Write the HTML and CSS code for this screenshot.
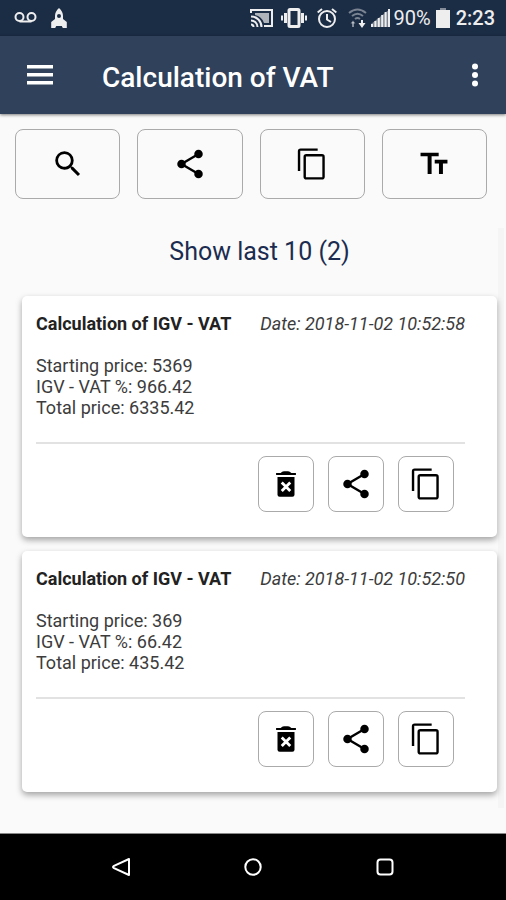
FILE: index.html
```html
<!DOCTYPE html>
<html lang="en">
<head>
    <meta charset="UTF-8">
    <meta name="viewport" content="width=device-width, initial-scale=1.0">
    <title>Calculation of VAT</title>
    <link rel="stylesheet" href="styles.css">
</head>
<body>
    <!-- Shared icons -->
    <svg class="sprite" aria-hidden="true">
        <symbol id="icon-search" viewBox="0 0 24 24">
            <path d="M15.5 14h-.79l-.28-.27A6.47 6.47 0 0 0 16 9.5 6.5 6.5 0 1 0 9.5 16c1.61 0 3.09-.59 4.23-1.57l.27.28v.79l5 4.99L20.49 19l-4.99-5zm-6 0C7.01 14 5 11.99 5 9.5S7.01 5 9.5 5 14 7.01 14 9.5 11.99 14 9.5 14z"/>
        </symbol>
        <symbol id="icon-share" viewBox="0 0 24 24">
            <path d="M18 5 6 12l12 7" fill="none" stroke="currentColor" stroke-width="1.7"/>
            <circle cx="18" cy="5" r="3"/>
            <circle cx="6" cy="12" r="3"/>
            <circle cx="18" cy="19" r="3"/>
        </symbol>
        <symbol id="icon-copy" viewBox="0 0 24 24">
            <path d="M16 1H4a2 2 0 0 0-2 2v14h1.7V2.7H16V1zm3 4H8a2 2 0 0 0-2 2v14a2 2 0 0 0 2 2h11a2 2 0 0 0 2-2V7a2 2 0 0 0-2-2zm.3 16.3H7.7V6.7h11.6v14.6z"/>
        </symbol>
        <symbol id="icon-text" viewBox="0 0 24 24">
            <path d="M2.500 4v2.600h5V19h2.800V6.600h5V4H2.500zm19 5h-9v2.600h3V19h2.800v-7.400h3.200V9z"/>
        </symbol>
        <symbol id="icon-trash" viewBox="0 0 24 24">
            <path d="M5 5.600V4.200h3.200C9 3.300 10.200 3 12 3s3 .3 3.800 1.200H19v1.400zM6 7h12v12.500A1.500 1.500 0 0 1 16.500 21h-9A1.500 1.500 0 0 1 6 19.500z"/>
            <path d="m9 11 6 6m0-6-6 6" fill="none" stroke="#fff" stroke-width="2"/>
        </symbol>
    </svg>

    <div class="status-bar">
        <div class="status-left">
            <svg width="23" height="20" viewBox="0 0 23 20" fill="none" stroke="currentColor" stroke-width="2">
                <circle cx="5.500" cy="9" r="4"/>
                <circle cx="17.500" cy="9" r="4"/>
                <path d="M5.500 13.500h12"/>
            </svg>
            <svg width="16" height="20" viewBox="0 0 16 20" fill="currentColor">
                <path fill-rule="evenodd" d="M8 0c2.600 2.400 4 5 4 8v3l3.800 3V20h-4l-1-2H5.200l-1 2h-4v-6L4 11V8c0-3 1.400-5.600 4-8zm0 6a2 2 0 1 0 0 4 2 2 0 0 0 0-4z"/>
            </svg>
        </div>
        <div class="status-right">
            <svg width="23" height="20" viewBox="0 0 23 20" fill="none" stroke="currentColor" stroke-width="2">
                <path d="M1 5V2h21v16h-8M1 16.500a2.500 2.500 0 0 1 2.500 2.500M1 12.500A6.500 6.500 0 0 1 7.500 19M1 8.500A10.500 10.500 0 0 1 11.500 19"/>
                <path d="M5 5h14v10h-5C12.500 10.500 9.500 8 5 7z" fill="currentColor" stroke="none" opacity=".7"/>
            </svg>
            <svg class="icon-vibrate" width="26" height="20" viewBox="0 0 26 20" fill="none" stroke="currentColor">
                <rect x="8" y="1.500" width="10" height="17" rx="1" stroke-width="3"/>
                <path d="M4.500 5v10M21.500 5v10" stroke-width="3"/>
                <path d="M1 7.500v5M25 7.500v5" stroke-width="2"/>
            </svg>
            <svg width="20" height="20" viewBox="0 0 20 20" fill="none" stroke="currentColor" stroke-width="2">
                <circle cx="10" cy="11" r="8"/>
                <path d="M10 6v5.500l4 2.500M.7 4.500 5 1M19.300 4.500 15 1"/>
            </svg>
            <svg class="icon-wifi" width="19" height="20" viewBox="0 0 19 20" fill="none" stroke="currentColor">
                <path d="M1 5q8.500-7 17 0M4 8q5.500-4.500 11 0M7 11q2.500-2 5 0" stroke-width="2" opacity=".45"/>
                <path d="M5 19v-5" stroke-width="2" opacity=".5"/>
                <path d="m2.500 15.500 2.500-3 2.500 3z" fill="currentColor" stroke="none" opacity=".5"/>
                <path d="M14 12v4" stroke-width="2"/>
                <path d="m10.500 15 3.500 5 3.500-5z" fill="currentColor" stroke="none"/>
            </svg>
            <svg class="icon-signal" width="19" height="20" viewBox="0 0 19 20" fill="currentColor">
                <path d="M0 16h2v3H0zM3.400 13h2v6h-2zM6.800 10h2v9h-2zM10.200 7h2v12h-2zM13.600 4h2v15h-2zM17 1h2v18h-2z"/>
                <path d="M0 16 19 1v18H0z" opacity=".45"/>
            </svg>
            <span class="battery-level">90%</span>
            <svg class="icon-battery" width="14" height="20" viewBox="0 0 14 20" fill="currentColor">
                <path d="M4 0h6v2H4z" opacity=".5"/>
                <path d="M0 2h14v18H0z"/>
            </svg>
            <span class="clock">2:23</span>
        </div>
    </div>

    <header class="app-bar">
        <button class="bar-btn" aria-label="Menu">
            <svg width="26" height="22" viewBox="0 0 26 22" fill="currentColor">
                <path d="M0 1h26v3.500H0zM0 9h26v3.500H0zM0 17h26v3.500H0z"/>
            </svg>
        </button>
        <h1>Calculation of VAT</h1>
        <button class="bar-btn" aria-label="More options">
            <svg width="8" height="24" viewBox="0 0 8 24" fill="currentColor">
                <circle cx="4" cy="3.500" r="3"/>
                <circle cx="4" cy="12" r="3"/>
                <circle cx="4" cy="20.500" r="3"/>
            </svg>
        </button>
    </header>

    <main>
        <div class="toolbar">
            <button class="icon-btn" aria-label="Search"><svg class="icon"><use href="#icon-search"/></svg></button>
            <button class="icon-btn" aria-label="Share all"><svg class="icon"><use href="#icon-share"/></svg></button>
            <button class="icon-btn" aria-label="Copy all"><svg class="icon"><use href="#icon-copy"/></svg></button>
            <button class="icon-btn" aria-label="Text size"><svg class="icon"><use href="#icon-text"/></svg></button>
        </div>

        <section class="history">
            <h2>Show last 10 (2)</h2>

            <article class="card">
                <div class="card-header">
                    <h3>Calculation of IGV - VAT</h3>
                    <time datetime="2018-11-02T10:52:58">Date: 2018-11-02 10:52:58</time>
                </div>
                <p>Starting price: 5369</p>
                <p>IGV - VAT %: 966.42</p>
                <p>Total price: 6335.42</p>
                <div class="card-actions">
                    <button class="icon-btn" aria-label="Delete"><svg class="icon"><use href="#icon-trash"/></svg></button>
                    <button class="icon-btn" aria-label="Share"><svg class="icon"><use href="#icon-share"/></svg></button>
                    <button class="icon-btn" aria-label="Copy"><svg class="icon"><use href="#icon-copy"/></svg></button>
                </div>
            </article>

            <article class="card">
                <div class="card-header">
                    <h3>Calculation of IGV - VAT</h3>
                    <time datetime="2018-11-02T10:52:50">Date: 2018-11-02 10:52:50</time>
                </div>
                <p>Starting price: 369</p>
                <p>IGV - VAT %: 66.42</p>
                <p>Total price: 435.42</p>
                <div class="card-actions">
                    <button class="icon-btn" aria-label="Delete"><svg class="icon"><use href="#icon-trash"/></svg></button>
                    <button class="icon-btn" aria-label="Share"><svg class="icon"><use href="#icon-share"/></svg></button>
                    <button class="icon-btn" aria-label="Copy"><svg class="icon"><use href="#icon-copy"/></svg></button>
                </div>
            </article>
        </section>
    </main>

    <nav class="nav-bar">
        <button class="bar-btn" aria-label="Back">
            <svg width="20" height="20" viewBox="0 0 20 20" fill="none" stroke="currentColor" stroke-width="2" stroke-linejoin="round">
                <path d="M18 2v16L3 11.200q-2-1.200 0-2.400z"/>
            </svg>
        </button>
        <button class="bar-btn" aria-label="Home">
            <svg width="20" height="20" viewBox="0 0 20 20" fill="none" stroke="currentColor" stroke-width="2">
                <circle cx="10" cy="10" r="7.700"/>
            </svg>
        </button>
        <button class="bar-btn" aria-label="Recent apps">
            <svg width="20" height="20" viewBox="0 0 20 20" fill="none" stroke="currentColor" stroke-width="2">
                <rect x="2.500" y="2.500" width="15" height="15" rx="3"/>
            </svg>
        </button>
    </nav>
</body>
</html>
```
FILE: styles.css
```css
* {
    box-sizing: border-box;
}
body {
    margin: 0;
    min-height: 100vh;
    display: flex;
    flex-direction: column;
    font-family: Roboto, "Liberation Sans", sans-serif;
    background: #fafafa;
    color: #3c3c3c;
}
h1, h2, h3, p {
    margin: 0;
}
svg {
    display: block;
    flex: none;
}
button {
    padding: 0;
    cursor: pointer;
}
.sprite {
    position: absolute;
    width: 0;
    height: 0;
}

/* Status bar */
.status-bar {
    display: flex;
    justify-content: space-between;
    align-items: center;
    height: 36px;
    padding: 0 11px 0 14px;
    background: #1b2c45;
    color: #eee;
}
.status-left,
.status-right {
    display: flex;
    align-items: center;
}
.status-left {
    gap: 14px;
}
.icon-vibrate {
    margin: 0 10px 0 8px;
}
.icon-wifi {
    margin-left: 11px;
}
.icon-signal {
    margin: 0 3px 0 4px;
}
.battery-level {
    font-size: 20px;
}
.icon-battery {
    margin: 0 6px 0 5px;
}
.clock {
    font-size: 20px;
    font-weight: 500;
}

/* App bar */
.app-bar {
    position: relative;
    display: flex;
    align-items: center;
    height: 78px;
    padding: 0 27px;
    background: #2f415b;
    color: #fff;
    box-shadow: 0 1px 3px rgba(0, 0, 0, 0.5);
}
.app-bar h1 {
    flex: 1;
    margin-left: 49px;
    padding-top: 4px;
    font-size: 28px;
    font-weight: 500;
}
.bar-btn {
    border: none;
    background: none;
    color: inherit;
}

/* Content */
main {
    flex: 1;
}
.toolbar {
    display: grid;
    grid-template-columns: repeat(4, 1fr);
    gap: 17px;
    padding: 15px 19px 29px 15px;
}
.icon-btn {
    display: flex;
    justify-content: center;
    align-items: center;
    height: 70px;
    border: 1px solid #aaa;
    border-radius: 8px;
    background: transparent;
    color: #000;
}
.icon {
    width: 34px;
    height: 34px;
    fill: currentColor;
}
.history {
    margin-right: 2px;
    padding: 0 1px 16px 22px;
    border-right: 6px solid #f5f5f5;
}
.history h2 {
    padding: 8px 0 28px;
    font-size: 25px;
    line-height: 32px;
    font-weight: 400;
    text-align: center;
    color: #1b2c50;
}
.card {
    padding: 17px 32px 25px 14px;
    border-radius: 5px;
    background: #fff;
    box-shadow: 0 3px 6px rgba(0, 0, 0, 0.35);
    font-size: 18px;
    line-height: 21px;
}
.card + .card {
    margin-top: 14px;
}
.card-header {
    display: flex;
    justify-content: space-between;
    margin-bottom: 21px;
}
.card h3 {
    font-size: 18px;
    font-weight: 700;
    color: #222;
}
.card time {
    font-style: italic;
}
.card-actions {
    display: flex;
    justify-content: flex-end;
    gap: 14px;
    margin-top: 24px;
    padding: 12px 11px 0 0;
    border-top: 2px solid #e2e2e2;
}
.card-actions .icon-btn {
    width: 56px;
    height: 56px;
}

/* Navigation bar */
.nav-bar {
    display: flex;
    justify-content: center;
    align-items: center;
    gap: 112px;
    height: 67px;
    border-top: 1px solid #888;
    background: #000;
    color: #fff;
}
```
